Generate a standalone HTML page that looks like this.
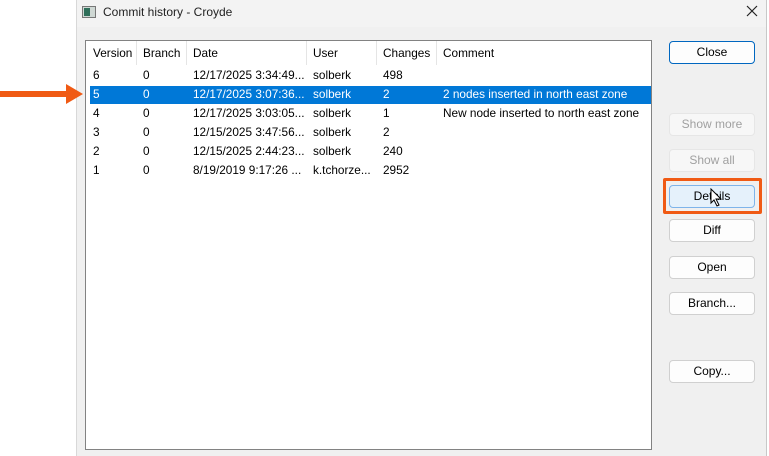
<!DOCTYPE html>
<html><head><style>
*{margin:0;padding:0;box-sizing:border-box}
body{width:769px;height:456px;background:#fff;position:relative;overflow:hidden;font-family:"Liberation Sans",sans-serif;font-size:12px;color:#000}
.win{position:absolute;left:76px;top:0;width:691px;height:456px;background:#f0f0f0;border-left:1px solid #d8d8d8;border-right:1px solid #c8c8c8}
.title{position:absolute;left:0;top:0;width:100%;height:27px;background:#f3f3f3}
.t{position:absolute;white-space:nowrap}
.list{position:absolute;left:85px;top:40px;width:567px;height:410px;background:#fff;border:1px solid #828282}
.hdr{position:absolute;left:0;top:0;width:100%;height:24px;background:#fff}
.sep{position:absolute;top:0;width:1px;height:24px;background:#e5e5e5}
.sel{position:absolute;left:4px;top:45px;width:561px;height:18px;background:#0078d7}
.btn{position:absolute;left:669px;width:86px;height:23px;background:#fdfdfd;border:1px solid #d0d0d0;border-radius:4px;text-align:center;line-height:21px;font-size:12px}
.rows{font-size:11.8px}
</style></head><body>
<div class="win"><div class="title"></div></div>
<div style="position:absolute;left:82px;top:6px;width:14px;height:12px;border:1px solid #777;background:#cfd8d4"><div style="position:absolute;left:1px;top:1px;width:6px;height:8px;background:#2f6f5a"></div></div>
<div class="t" style="left:103px;top:5px;font-size:12px;color:#222">Commit history - Croyde</div>
<svg style="position:absolute;left:746px;top:5px" width="12" height="12"><path d="M1 1 L11 11 M11 1 L1 11" stroke="#222" stroke-width="1.2"/></svg>
<div class="list">
<div class="hdr">
<div class="sep" style="left:50px"></div><div class="sep" style="left:100px"></div><div class="sep" style="left:220px"></div><div class="sep" style="left:290px"></div><div class="sep" style="left:350px"></div>
</div>
<div class="sel"></div>
</div>
<div class="rows" style="position:absolute;left:0;top:0">
<div class="t" style="left:93px;top:46px">Version</div><div class="t" style="left:143px;top:46px">Branch</div><div class="t" style="left:193px;top:46px">Date</div><div class="t" style="left:313px;top:46px">User</div><div class="t" style="left:383px;top:46px">Changes</div><div class="t" style="left:443px;top:46px">Comment</div>

<div class="t" style="left:93px;top:68px">6</div><div class="t" style="left:143px;top:68px">0</div><div class="t" style="left:193px;top:68px">12/17/2025 3:34:49...</div><div class="t" style="left:313px;top:68px">solberk</div><div class="t" style="left:383px;top:68px">498</div>
<div style="color:#fff">
<div class="t" style="left:93px;top:87px">5</div><div class="t" style="left:143px;top:87px">0</div><div class="t" style="left:193px;top:87px">12/17/2025 3:07:36...</div><div class="t" style="left:313px;top:87px">solberk</div><div class="t" style="left:383px;top:87px">2</div><div class="t" style="left:443px;top:87px">2 nodes inserted in north east zone</div>
</div>
<div class="t" style="left:93px;top:106px">4</div><div class="t" style="left:143px;top:106px">0</div><div class="t" style="left:193px;top:106px">12/17/2025 3:03:05...</div><div class="t" style="left:313px;top:106px">solberk</div><div class="t" style="left:383px;top:106px">1</div><div class="t" style="left:443px;top:106px">New node inserted to north east zone</div>
<div class="t" style="left:93px;top:125px">3</div><div class="t" style="left:143px;top:125px">0</div><div class="t" style="left:193px;top:125px">12/15/2025 3:47:56...</div><div class="t" style="left:313px;top:125px">solberk</div><div class="t" style="left:383px;top:125px">2</div>
<div class="t" style="left:93px;top:144px">2</div><div class="t" style="left:143px;top:144px">0</div><div class="t" style="left:193px;top:144px">12/15/2025 2:44:23...</div><div class="t" style="left:313px;top:144px">solberk</div><div class="t" style="left:383px;top:144px">240</div>
<div class="t" style="left:93px;top:163px">1</div><div class="t" style="left:143px;top:163px">0</div><div class="t" style="left:193px;top:163px">8/19/2019 9:17:26 ...</div><div class="t" style="left:313px;top:163px">k.tchorze...</div><div class="t" style="left:383px;top:163px">2952</div>
</div>
<div class="btn" style="top:41px;border:1px solid #0067c0;border-radius:4px">Close</div>
<div class="btn" style="top:113px;color:#a0a0a0;border-color:#e6e6e6;background:#f7f7f7">Show more</div>
<div class="btn" style="top:149px;color:#a0a0a0;border-color:#e6e6e6;background:#f7f7f7">Show all</div>
<div style="position:absolute;left:663px;top:178px;width:99px;height:36px;border:3px solid #f05a14;border-radius:2px"></div>
<div class="btn" style="top:185px;background:#e5f1fb;border-color:#7eb4ea">Details</div>
<div class="btn" style="top:219px">Diff</div>
<div class="btn" style="top:256px">Open</div>
<div class="btn" style="top:292px">Branch...</div>
<div class="btn" style="top:360px">Copy...</div>
<svg style="position:absolute;left:710px;top:188px" width="14" height="20"><path d="M1 1 L1 15 L4 12 L7 18 L9 17 L6 11 L11 11 Z" fill="#fff" stroke="#000" stroke-width="1"/></svg>
<svg style="position:absolute;left:0;top:80px" width="90" height="30"><rect x="0" y="11" width="67" height="6" fill="#f05a14"/><path d="M66 4 L83 14 L66 24 Z" fill="#f05a14"/></svg>
</body></html>
